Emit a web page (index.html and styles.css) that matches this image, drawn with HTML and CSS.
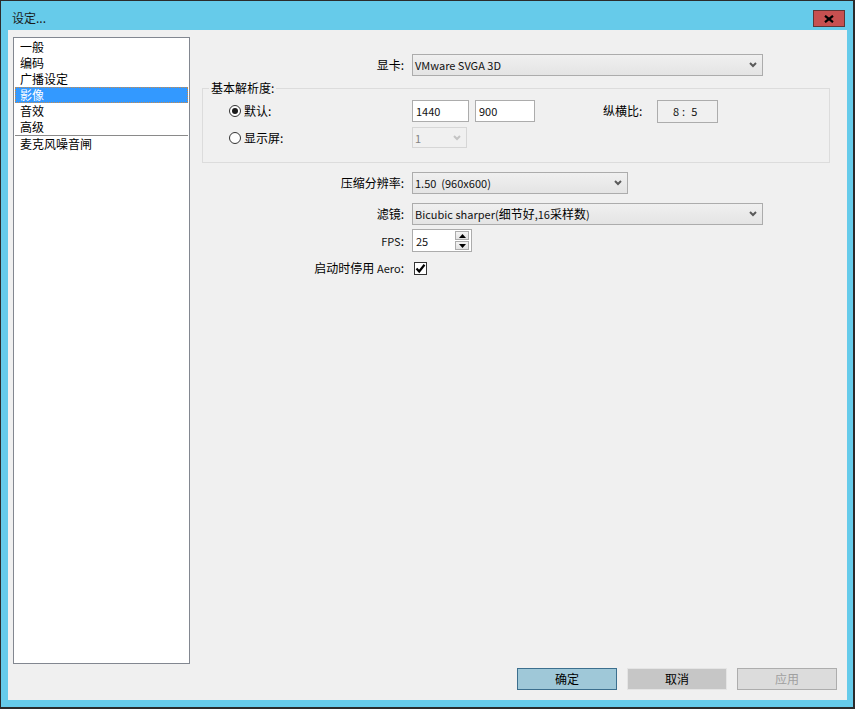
FILE: index.html
```html
<!DOCTYPE html>
<html lang="zh-CN">
<head>
<meta charset="utf-8">
<title>设定...</title>
<link rel="stylesheet" href="styles.css">
</head>
<body>
<div class="window">
  <div class="titlebar">
    <span class="title">设定...</span>
    <div class="close"><svg width="10" height="8" viewBox="0 0 10 8"><path d="M1 0.8 L9 7.2 M9 0.8 L1 7.2" stroke="#000" stroke-width="2.2" fill="none"/></svg></div>
  </div>
  <div class="client">
    <div class="body">
      <ul class="nav">
        <li>一般</li>
        <li>编码</li>
        <li>广播设定</li>
        <li class="sel">影像</li>
        <li>音效</li>
        <li>高级</li>
        <li class="sep">麦克风噪音闸</li>
      </ul>
      <div class="main">
        <div class="row row-gpu">
          <span class="lbl">显卡:</span>
          <div class="select w-wide"><span class="en">VMware SVGA 3D</span><svg class="arrow" width="8" height="6" viewBox="0 0 8 6"><path d="M1 1 L4 4 L7 1" stroke="#5a5a5a" stroke-width="2" fill="none"/></svg></div>
        </div>
        <div class="group">
          <span class="legend">基本解析度:</span>
          <div class="grow grow-1">
            <div class="radio-cell"><span class="radio on"></span>默认:</div>
            <div class="text-in w-w"><span class="en">1440</span></div>
            <div class="text-in w-h"><span class="en">900</span></div>
            <span class="aspect-lbl">纵横比:</span>
            <div class="aspect"><span class="en">8<span class="colon">:</span>5</span></div>
          </div>
          <div class="grow grow-2">
            <div class="radio-cell"><span class="radio"></span>显示屏:</div>
            <div class="select disabled w-mon"><span class="en">1</span><svg class="arrow" width="8" height="6" viewBox="0 0 8 6"><path d="M1 1 L4 4 L7 1" stroke="#c4c4c4" stroke-width="2" fill="none"/></svg></div>
          </div>
        </div>
        <div class="row row-scale">
          <span class="lbl">压缩分辨率:</span>
          <div class="select w-mid"><span class="en pre">1.50  (960x600)</span><svg class="arrow" width="8" height="6" viewBox="0 0 8 6"><path d="M1 1 L4 4 L7 1" stroke="#5a5a5a" stroke-width="2" fill="none"/></svg></div>
        </div>
        <div class="row row-filter">
          <span class="lbl">滤镜:</span>
          <div class="select w-wide"><span><span class="en">Bicubic sharper(</span>细节好<span class="en">,16</span>采样数<span class="en">)</span></span><svg class="arrow" width="8" height="6" viewBox="0 0 8 6"><path d="M1 1 L4 4 L7 1" stroke="#5a5a5a" stroke-width="2" fill="none"/></svg></div>
        </div>
        <div class="row row-fps">
          <span class="lbl"><span class="en">FPS</span>:</span>
          <div class="spin">
            <span class="en">25</span>
            <div class="spin-btns">
              <div class="spin-btn"><svg width="7" height="4" viewBox="0 0 7 4"><path d="M3.5 0 L7 4 L0 4 Z" fill="#000"/></svg></div>
              <div class="spin-btn"><svg width="7" height="4" viewBox="0 0 7 4"><path d="M0 0 L7 0 L3.5 4 Z" fill="#000"/></svg></div>
            </div>
          </div>
        </div>
        <div class="row row-aero">
          <span class="lbl">启动时停用 <span class="en">Aero</span>:</span>
          <div class="check"><svg width="11" height="11" viewBox="0 0 11 11"><path d="M1.5 5.5 L4.2 8.5 L9.5 1.8" stroke="#000" stroke-width="2.2" fill="none"/></svg></div>
        </div>
      </div>
    </div>
    <div class="footer">
      <div class="btn btn-ok">确定</div>
      <div class="btn btn-cancel">取消</div>
      <div class="btn btn-apply">应用</div>
    </div>
  </div>
</div>
</body>
</html>
```
FILE: styles.css
```css
* { box-sizing: border-box; }
html, body {
  margin: 0;
  padding: 0;
  background: #2b2b2b;
}
body {
  font-family: "Noto Sans CJK SC", "Noto Sans", sans-serif;
  font-size: 12px;
  line-height: 16px;
  color: #000;
}
.en {
  font-size: 11px;
  color: #111;
}
.pre { white-space: pre; }
.window {
  width: 855px;
  height: 709px;
  border: 1px solid #2b2b2b;
  border-right-width: 2px;
  border-bottom-width: 2px;
  background: #66cbea;
  display: flex;
  flex-direction: column;
}
.titlebar {
  height: 29px;
  display: flex;
  align-items: flex-start;
  justify-content: space-between;
}
.title {
  padding: 9px 0 0 11px;
  line-height: 16px;
  color: #1a1a1a;
}
.close {
  margin: 9px 8px 0 0;
  width: 32px;
  height: 17px;
  background: #c75050;
  border: 1px solid #5e3535;
  display: flex;
  align-items: center;
  justify-content: center;
}
.close svg { display: block; }
.client {
  margin: 0 6px 7px 7px;
  height: 670px;
  background: #f0f0f0;
  display: flex;
  flex-direction: column;
}
.body {
  display: flex;
  padding: 7px 0 0 5px;
}
.nav {
  list-style: none;
  margin: 0;
  width: 177px;
  height: 627px;
  border: 1px solid #828790;
  background: #fff;
  padding: 1px;
}
.nav li {
  height: 16px;
  line-height: 16px;
  padding-left: 5px;
}
.nav li.sel {
  background: #3399ff;
  color: #fff;
  outline: 1px dotted #c98a4a;
  outline-offset: -1px;
}
.nav li.sep {
  border-top: 1px solid #8a8a8a;
  height: 17px;
}
.main {
  flex: 1;
  padding: 17px 0 0 12px;
}
.row {
  display: flex;
  align-items: center;
  height: 22px;
}
.lbl {
  width: 210px;
  text-align: right;
  padding-right: 8px;
  white-space: nowrap;
}
.select {
  height: 22px;
  border: 1px solid #acacac;
  background: linear-gradient(#f0f0f0, #e4e4e4);
  display: flex;
  align-items: center;
  padding: 0 5px 0 2px;
  white-space: nowrap;
}
.select .arrow {
  margin-left: auto;
  display: block;
}
.select.disabled {
  border-color: #d6d6d6;
  background: #f0f0f0;
  height: 21px;
}
.select.disabled .en { color: #838383; }
.w-wide { width: 351px; }
.w-mid { width: 216px; }
.w-mon { width: 55px; }
.group {
  position: relative;
  margin-top: 12px;
  width: 628px;
  height: 75px;
  border: 1px solid #dcdcdc;
  padding-top: 11px;
}
.legend {
  position: absolute;
  left: 6px;
  top: -9px;
  padding: 0 2px;
  background: #f0f0f0;
  line-height: 16px;
}
.grow {
  display: flex;
  align-items: center;
}
.grow-1 { height: 22px; }
.grow-2 { height: 21px; margin-top: 5px; }
.radio-cell {
  width: 209px;
  padding-left: 26px;
  display: flex;
  align-items: center;
}
.radio {
  width: 12px;
  height: 12px;
  border: 1px solid #333;
  border-radius: 50%;
  background: #fff;
  margin-right: 3px;
  display: flex;
  align-items: center;
  justify-content: center;
}
.radio.on::after {
  content: "";
  width: 6px;
  height: 6px;
  border-radius: 50%;
  background: #1a1a1a;
}
.text-in {
  height: 22px;
  border: 1px solid #acacac;
  background: #fff;
  padding-left: 3px;
  display: flex;
  align-items: center;
}
.w-w { width: 57px; }
.w-h { width: 60px; margin-left: 6px; }
.aspect-lbl {
  margin-left: 68px;
  width: 54px;
}
.aspect {
  width: 61px;
  height: 23px;
  border: 1px solid #acacac;
  background: #f0f0f0;
  display: flex;
  align-items: center;
  padding-left: 15px;
}
.colon { margin: 0 6px 0 3px; }
.row-scale { margin-top: 9px; }
.row-filter { margin-top: 9px; }
.row-fps { margin-top: 4px; height: 23px; }
.row-aero { margin-top: 5px; }
.spin {
  width: 60px;
  height: 23px;
  border: 1px solid #acacac;
  background: #fff;
  display: flex;
  align-items: center;
  padding: 0 2px 0 3px;
}
.spin-btns {
  margin-left: auto;
  display: flex;
  flex-direction: column;
  gap: 1px;
}
.spin-btn {
  width: 14px;
  height: 9px;
  border: 1px solid #acacac;
  background: linear-gradient(#f4f4f4, #e2e2e2);
  display: flex;
  align-items: center;
  justify-content: center;
}
.spin-btn svg { display: block; }
.check {
  margin-left: 2px;
  width: 13px;
  height: 13px;
  border: 1px solid #333;
  background: #fff;
  display: flex;
  align-items: center;
  justify-content: center;
}
.check svg { display: block; }
.footer {
  margin-top: 4px;
  display: flex;
  justify-content: flex-end;
  gap: 10px;
  padding-right: 10px;
}
.btn {
  width: 100px;
  height: 22px;
  display: flex;
  align-items: center;
  justify-content: center;
  border: 1px solid #acacac;
}
.btn-ok {
  background: #9fc8d8;
  border-color: #3c6f8e;
}
.btn-cancel {
  background: #c6c6c6;
  border-color: #e4e4e4;
}
.btn-apply {
  background: #dcdcdc;
  border-color: #adadad;
  color: #a0a0a0;
}
```
